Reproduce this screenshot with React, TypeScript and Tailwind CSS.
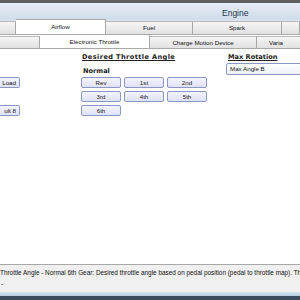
const gearRows = [
  ['Rev', '1st', '2nd'],
  ['3rd', '4th', '5th'],
  ['6th'],
];

function Tab({ label, w, h, active }: { label: string; w: string; h: string; active?: boolean }) {
  return (
    <div
      className={`${w} ${h} shrink-0 flex items-center justify-center border-r border-t border-[#a9a9a9] whitespace-nowrap overflow-hidden ${
        active ? 'bg-white' : 'bg-gradient-to-b from-[#f6f6f6] to-[#e1e1e1] border-t-[#b8b8b8]'
      }`}
    >
      {label}
    </div>
  );
}

function GearButton({ label }: { label: string }) {
  return (
    <div className="w-[40px] h-[11px] rounded-[2px] border border-[#8b97c4] bg-gradient-to-b from-[#f3f4fd] to-[#dfe2f5] flex items-center justify-center text-[#222]">
      {label}
    </div>
  );
}

const bold = { fontFamily: '"DejaVu Sans", Verdana, sans-serif' };

export default function App() {
  return (
    <div
      className="w-[300px] h-[300px] overflow-hidden flex flex-col bg-white text-[6.2px] text-[#111]"
      style={{ fontFamily: '"Liberation Sans", Arial, sans-serif' }}
    >
      <div className="h-[3px] shrink-0 bg-[#5f5f5f]" />
      <div className="h-[17px] shrink-0 bg-gradient-to-b from-[#e6edf5] to-[#cfdcea] flex items-center pt-[3px] pl-[222px] text-[8.5px] text-[#223852]">
        Engine
      </div>
      <div className="h-[15px] shrink-0 flex items-end border-b border-[#a9a9a9] bg-[#dfe6ef]">
        <Tab label="" w="w-[16px]" h="h-[13px]" />
        <Tab label="Airflow" w="w-[90px]" h="h-[15px]" active />
        <Tab label="Fuel" w="w-[87px]" h="h-[13px]" />
        <Tab label="Spark" w="w-[89px]" h="h-[13px]" />
        <Tab label="" w="w-[18px]" h="h-[13px]" />
      </div>
      <div className="h-[14px] shrink-0 flex items-end border-b border-[#a9a9a9] bg-white">
        <Tab label="" w="w-[40px]" h="h-[12px]" />
        <Tab label="Electronic Throttle" w="w-[110px]" h="h-[14px]" active />
        <Tab label="Charge Motion Device" w="w-[107px]" h="h-[12px]" />
        <div className="w-[43px] h-[12px] shrink-0 flex items-center pl-[12px] whitespace-nowrap bg-gradient-to-b from-[#f6f6f6] to-[#e1e1e1] border-t border-[#b8b8b8]">
          Varia
        </div>
      </div>

      <div className="flex-1 flex">
        <div className="w-[81px] shrink-0 flex flex-col pt-[28px]">
          <div className="w-[20px] h-[11px] rounded-r-[2px] border border-l-0 border-[#8b97c4] bg-gradient-to-b from-[#f3f4fd] to-[#dfe2f5] flex items-center justify-end pr-[3px]">
            Load
          </div>
          <div className="w-[20px] h-[11px] mt-[17px] rounded-r-[2px] border border-l-0 border-[#8b97c4] bg-gradient-to-b from-[#f3f4fd] to-[#dfe2f5] flex items-center justify-end pr-[3px] whitespace-nowrap">
            ult 8
          </div>
        </div>

        <div className="w-[145px] shrink-0 flex flex-col pt-[4px]">
          <div className="ml-[1px] h-[9px] font-bold underline text-[6.6px] tracking-[0.4px] text-[#222] whitespace-nowrap" style={bold}>
            Desired Throttle Angle
          </div>
          <div className="ml-[2px] mt-[5px] h-[9px] font-bold text-[6.6px] text-[#222]" style={bold}>
            Normal
          </div>
          <div className="flex flex-col gap-[3px] mt-[1px]">
            {gearRows.map((row, i) => (
              <div key={i} className="flex gap-[3px]">
                {row.map((g) => (
                  <GearButton key={g} label={g} />
                ))}
              </div>
            ))}
          </div>
        </div>

        <div className="flex-1 flex flex-col pt-[4px]">
          <div className="ml-[2px] h-[9px] font-bold underline text-[6.6px] text-[#222] whitespace-nowrap" style={bold}>
            Max Rotation
          </div>
          <div className="mt-[1px] w-[90px] h-[12px] border border-[#8b97c4] rounded-[2px] bg-gradient-to-b from-[#ffffff] to-[#eef0fa] flex items-center pl-[3px]">
            Max Angle B
          </div>
        </div>
      </div>

      <div className="h-[28px] shrink-0 border-t border-[#a8a8a8] bg-[#f0f0f0] flex flex-col pt-[2px] leading-[11px] whitespace-nowrap text-[6.4px]">
        <div>Throttle Angle - Normal 6th Gear: Desired throttle angle based on pedal position (pedal to throttle map). The</div>
        <div className="pl-[1px]">-</div>
      </div>
      <div className="h-[4px] shrink-0 bg-gradient-to-b from-[#d5e3f1] to-[#b7cde4]" />
      <div className="h-[4px] shrink-0 bg-[#3c4c5e]" />
    </div>
  );
}
